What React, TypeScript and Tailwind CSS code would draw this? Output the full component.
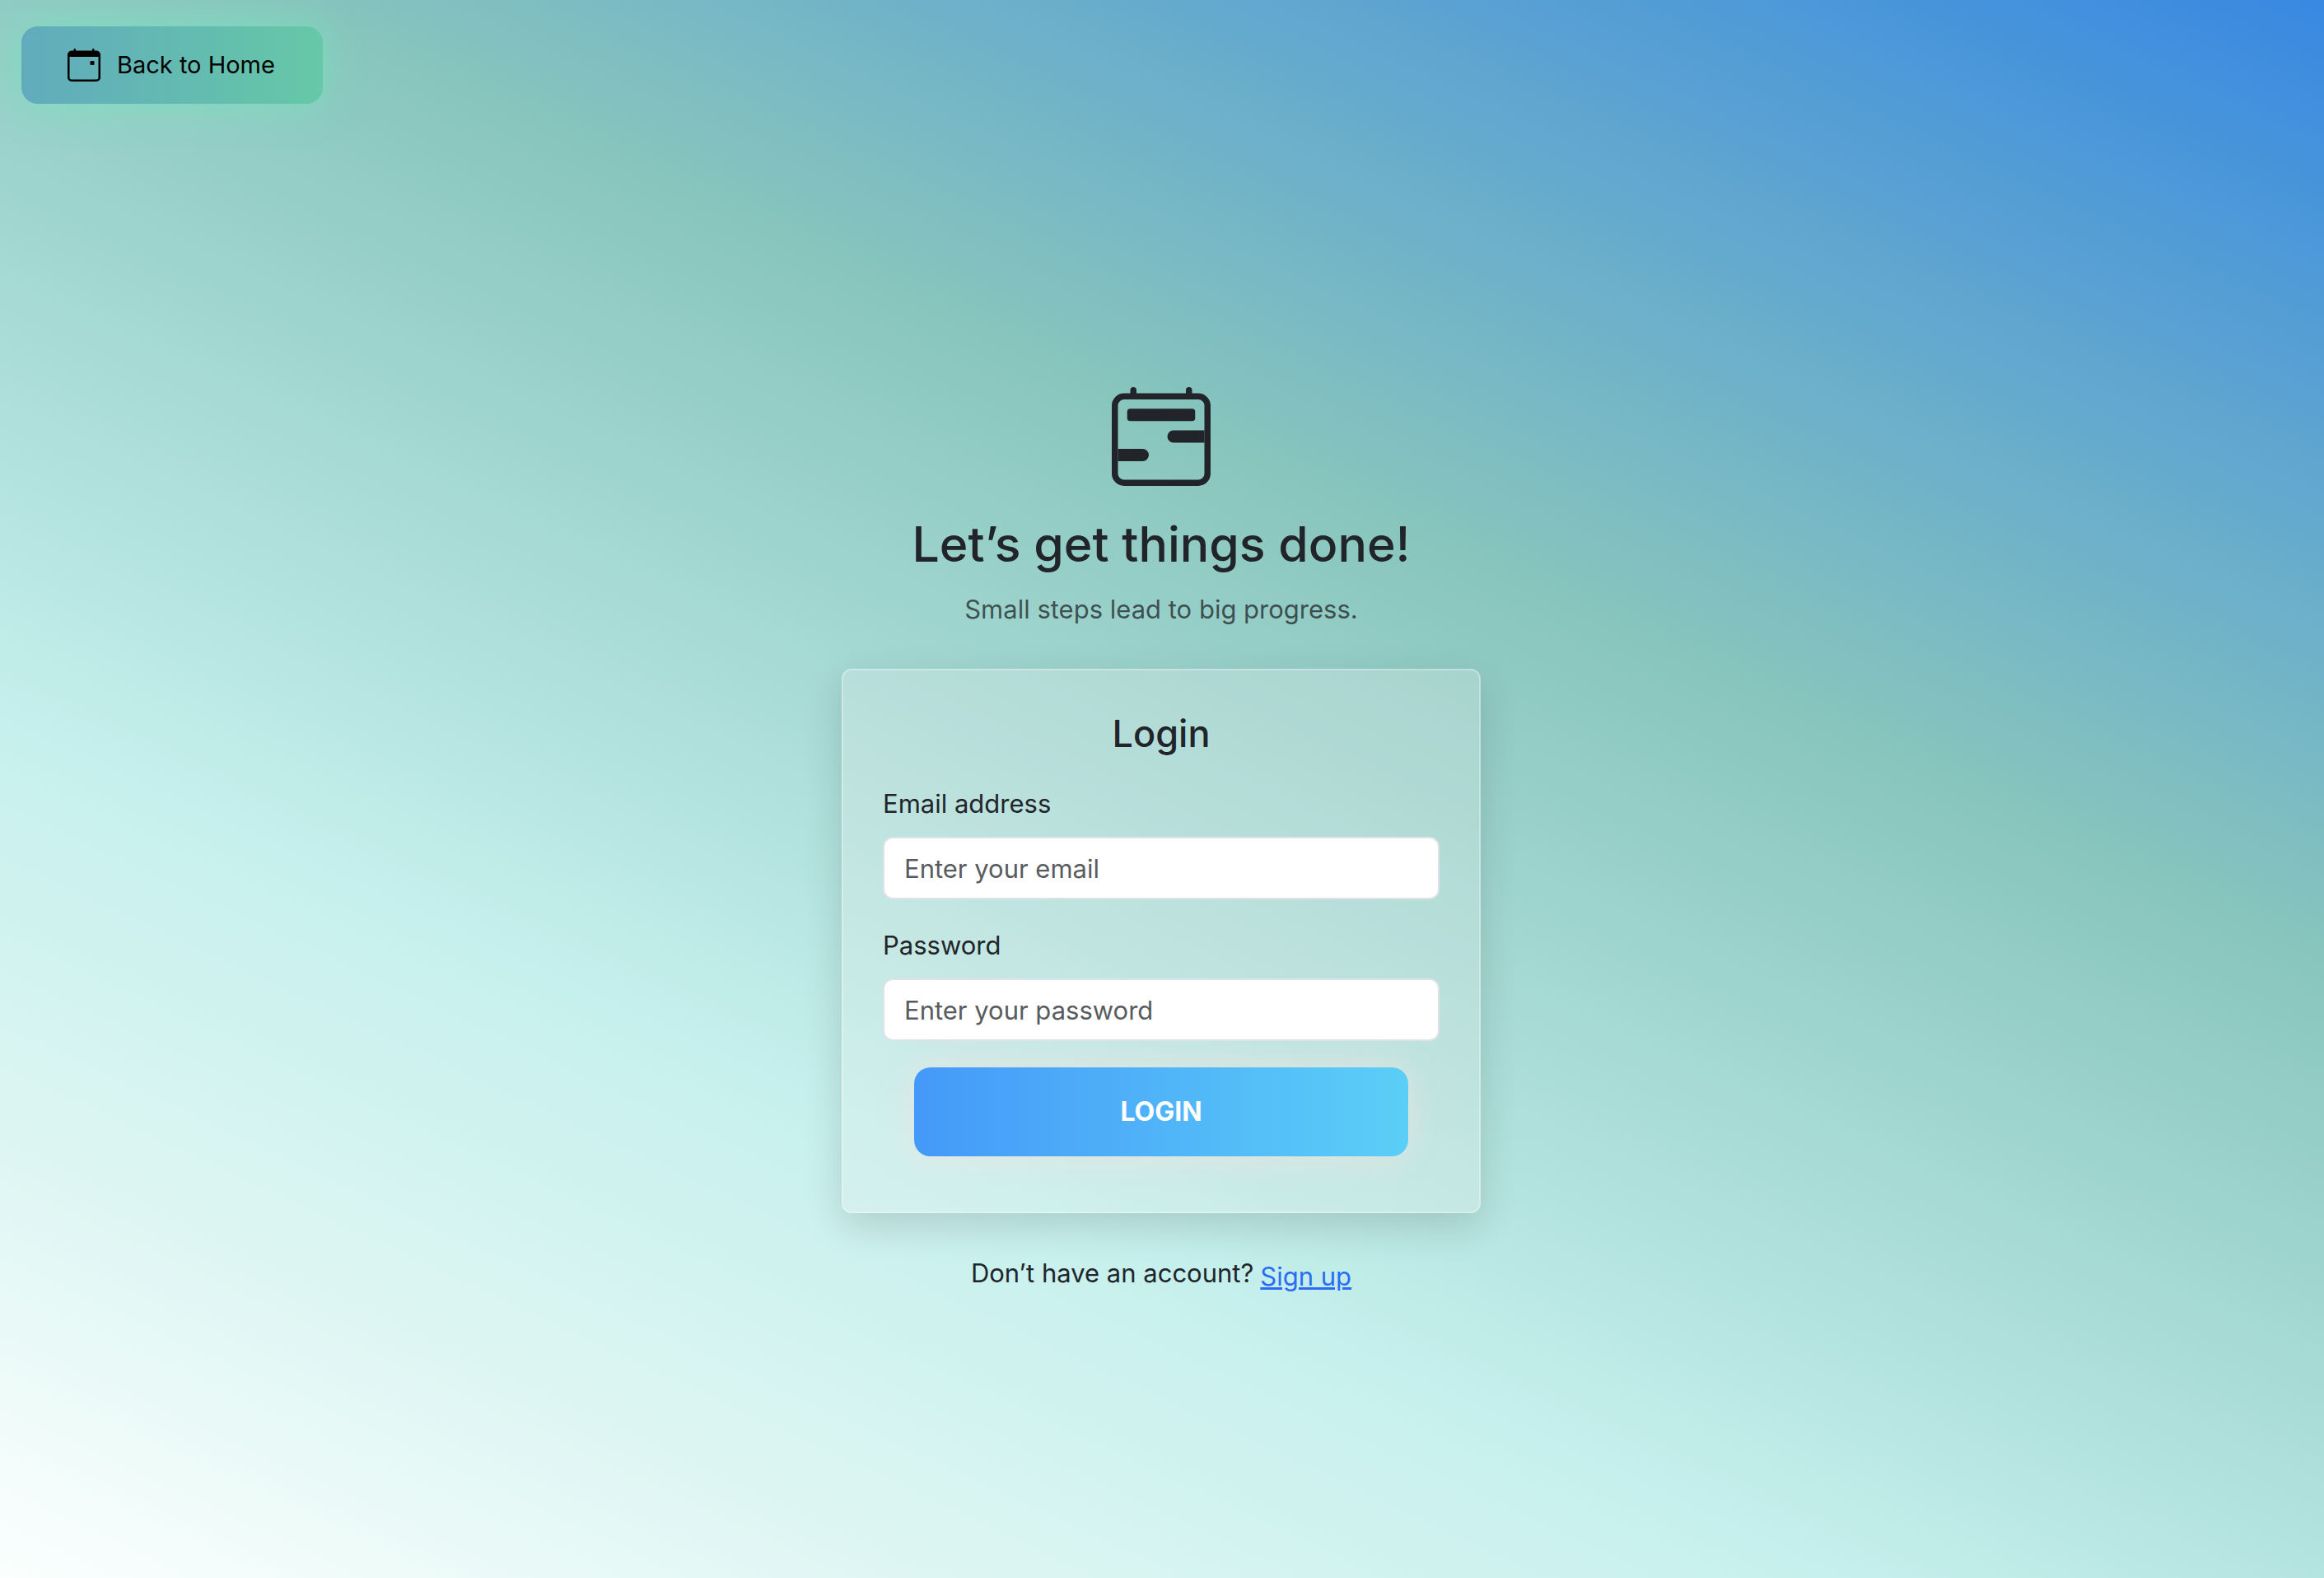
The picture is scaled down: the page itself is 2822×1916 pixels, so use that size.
import React from "react";
import { BsCalendar2Range, BsCalendarEvent } from "react-icons/bs";

type FieldProps = {
  id: string;
  label: string;
  type: string;
  placeholder: string;
};

function Field({ id, label, type, placeholder }: FieldProps) {
  return (
    <div className="flex flex-col gap-4">
      <label htmlFor={id} className="text-[31px] leading-[48px]">
        {label}
      </label>
      <input
        id={id}
        type={type}
        placeholder={placeholder}
        className="h-[76px] w-full rounded-xl border-2 border-[#dee2e6] bg-white px-6 text-[31px] outline-none placeholder:text-[#595c5f] placeholder:opacity-100"
      />
    </div>
  );
}

export default function App() {
  return (
    <div className="flex min-h-screen flex-col bg-[linear-gradient(25deg,#fbfffe_0%,#def6f3_16%,#c6f0ed_32%,#88c5bd_64%,#3888e2_100%)] font-['Inter',sans-serif] text-[#212529]">
      <header className="flex px-[26px] pt-8">
        <a
          href="#home"
          className="flex h-[94px] items-center gap-5 rounded-[20px] bg-[linear-gradient(90deg,#61abbd,#65c8a6)] px-14 pr-[58px] text-[29px] text-black shadow-[0_0_50px_rgba(119,228,191,0.8)]"
        >
          <BsCalendarEvent className="size-10" />
          Back to Home
        </a>
      </header>
      <main className="flex flex-col items-center pt-[344px] pr-[2px]">
        <BsCalendar2Range className="size-[120px]" />
        <h1 className="mt-8 text-[59px] leading-[78px] font-medium">Let’s get things done!</h1>
        <p className="mt-4 text-[31px] leading-[48px] text-[#212529]/75">Small steps lead to big progress.</p>
        <form className="mt-12 flex w-[776px] max-w-full flex-col rounded-xl border-2 border-white/30 bg-[#f0f0f0]/25 px-12 pt-12 pb-[67px] shadow-[0_16px_48px_rgba(0,0,0,0.14)]">
          <h2 className="text-center text-[45px] leading-[58px] font-medium">Login</h2>
          <div className="mt-8 flex flex-col gap-8">
            <Field id="email" label="Email address" type="email" placeholder="Enter your email" />
            <Field id="password" label="Password" type="password" placeholder="Enter your password" />
            <button
              type="submit"
              className="mx-[38px] h-[108px] rounded-[20px] bg-[linear-gradient(90deg,#4599f9,#5bcff7)] text-[32px] font-bold text-white shadow-[0_0_40px_rgba(238,228,220,0.8)]"
            >
              LOGIN
            </button>
          </div>
        </form>
        <p className="mt-12 flex gap-2 pb-12 text-[31px] leading-[50px]">
          Don’t have an account?
          <a href="#signup" className="pt-1 text-[#2b6cf6] underline">
            Sign up
          </a>
        </p>
      </main>
    </div>
  );
}
